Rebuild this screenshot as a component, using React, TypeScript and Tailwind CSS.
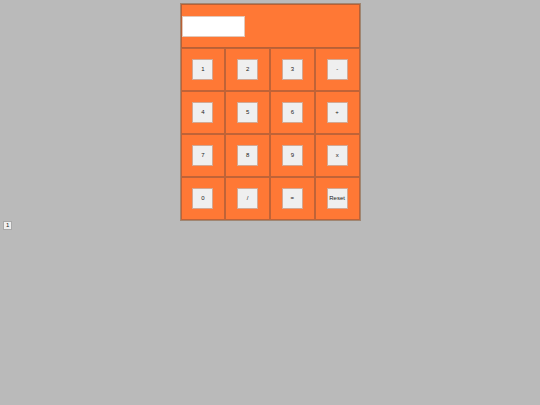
import { useState } from 'react';

const keys = [
  '1', '2', '3', '-',
  '4', '5', '6', '+',
  '7', '8', '9', 'x',
  '0', '/', '=', 'Reset',
];

const calculate = (a: number, b: number, operator: string) => {
  if (operator === '+') return a + b;
  if (operator === '-') return a - b;
  if (operator === 'x') return a * b;
  return a / b;
};

export default function App() {
  const [display, setDisplay] = useState<string>('');
  const [first, setFirst] = useState<number | null>(null);
  const [operator, setOperator] = useState<string>('');
  const [count, setCount] = useState<number>(1);

  const handleKey = (key: string) => {
    if (key === 'Reset') {
      setDisplay('');
      setFirst(null);
      setOperator('');
    } else if (key === '=') {
      if (first === null || display === '') return;
      setDisplay(String(calculate(first, Number(display), operator)));
      setFirst(null);
      setOperator('');
    } else if (['+', '-', 'x', '/'].includes(key)) {
      setFirst(Number(display));
      setOperator(key);
      setDisplay('');
    } else {
      setDisplay(display + key);
    }
  };

  return (
    <div className="min-h-screen bg-[#bababa] px-[3px] pt-[3px] font-['Liberation_Sans',sans-serif] text-[6px] leading-[7px] text-[#222]">
      <div className="mx-auto grid w-1/3 min-w-[181px] grid-cols-4 border border-[#a08672] bg-[#ff7835]">
        <div className="col-span-4 flex h-11 items-center border border-[#b86035]">
          <input
            type="text"
            aria-label="Result"
            value={display}
            onChange={(e) => setDisplay(e.target.value)}
            className="h-[21px] w-[63px] border border-[#e3c8b8] bg-white px-1 outline-none"
          />
        </div>
        {keys.map((key) => (
          <div key={key} className="flex h-[43px] items-center justify-center border border-[#c06337]">
            <button
              onClick={() => handleKey(key)}
              className="flex size-[21px] items-center justify-center border border-[#d3a893] bg-[#efefef]"
            >
              {key}
            </button>
          </div>
        ))}
      </div>

      <button
        onClick={() => setCount(count + 1)}
        className="block border border-[#a8a8a8] bg-[#efefef] px-[2px]"
      >
        {count}
      </button>
    </div>
  );
}
